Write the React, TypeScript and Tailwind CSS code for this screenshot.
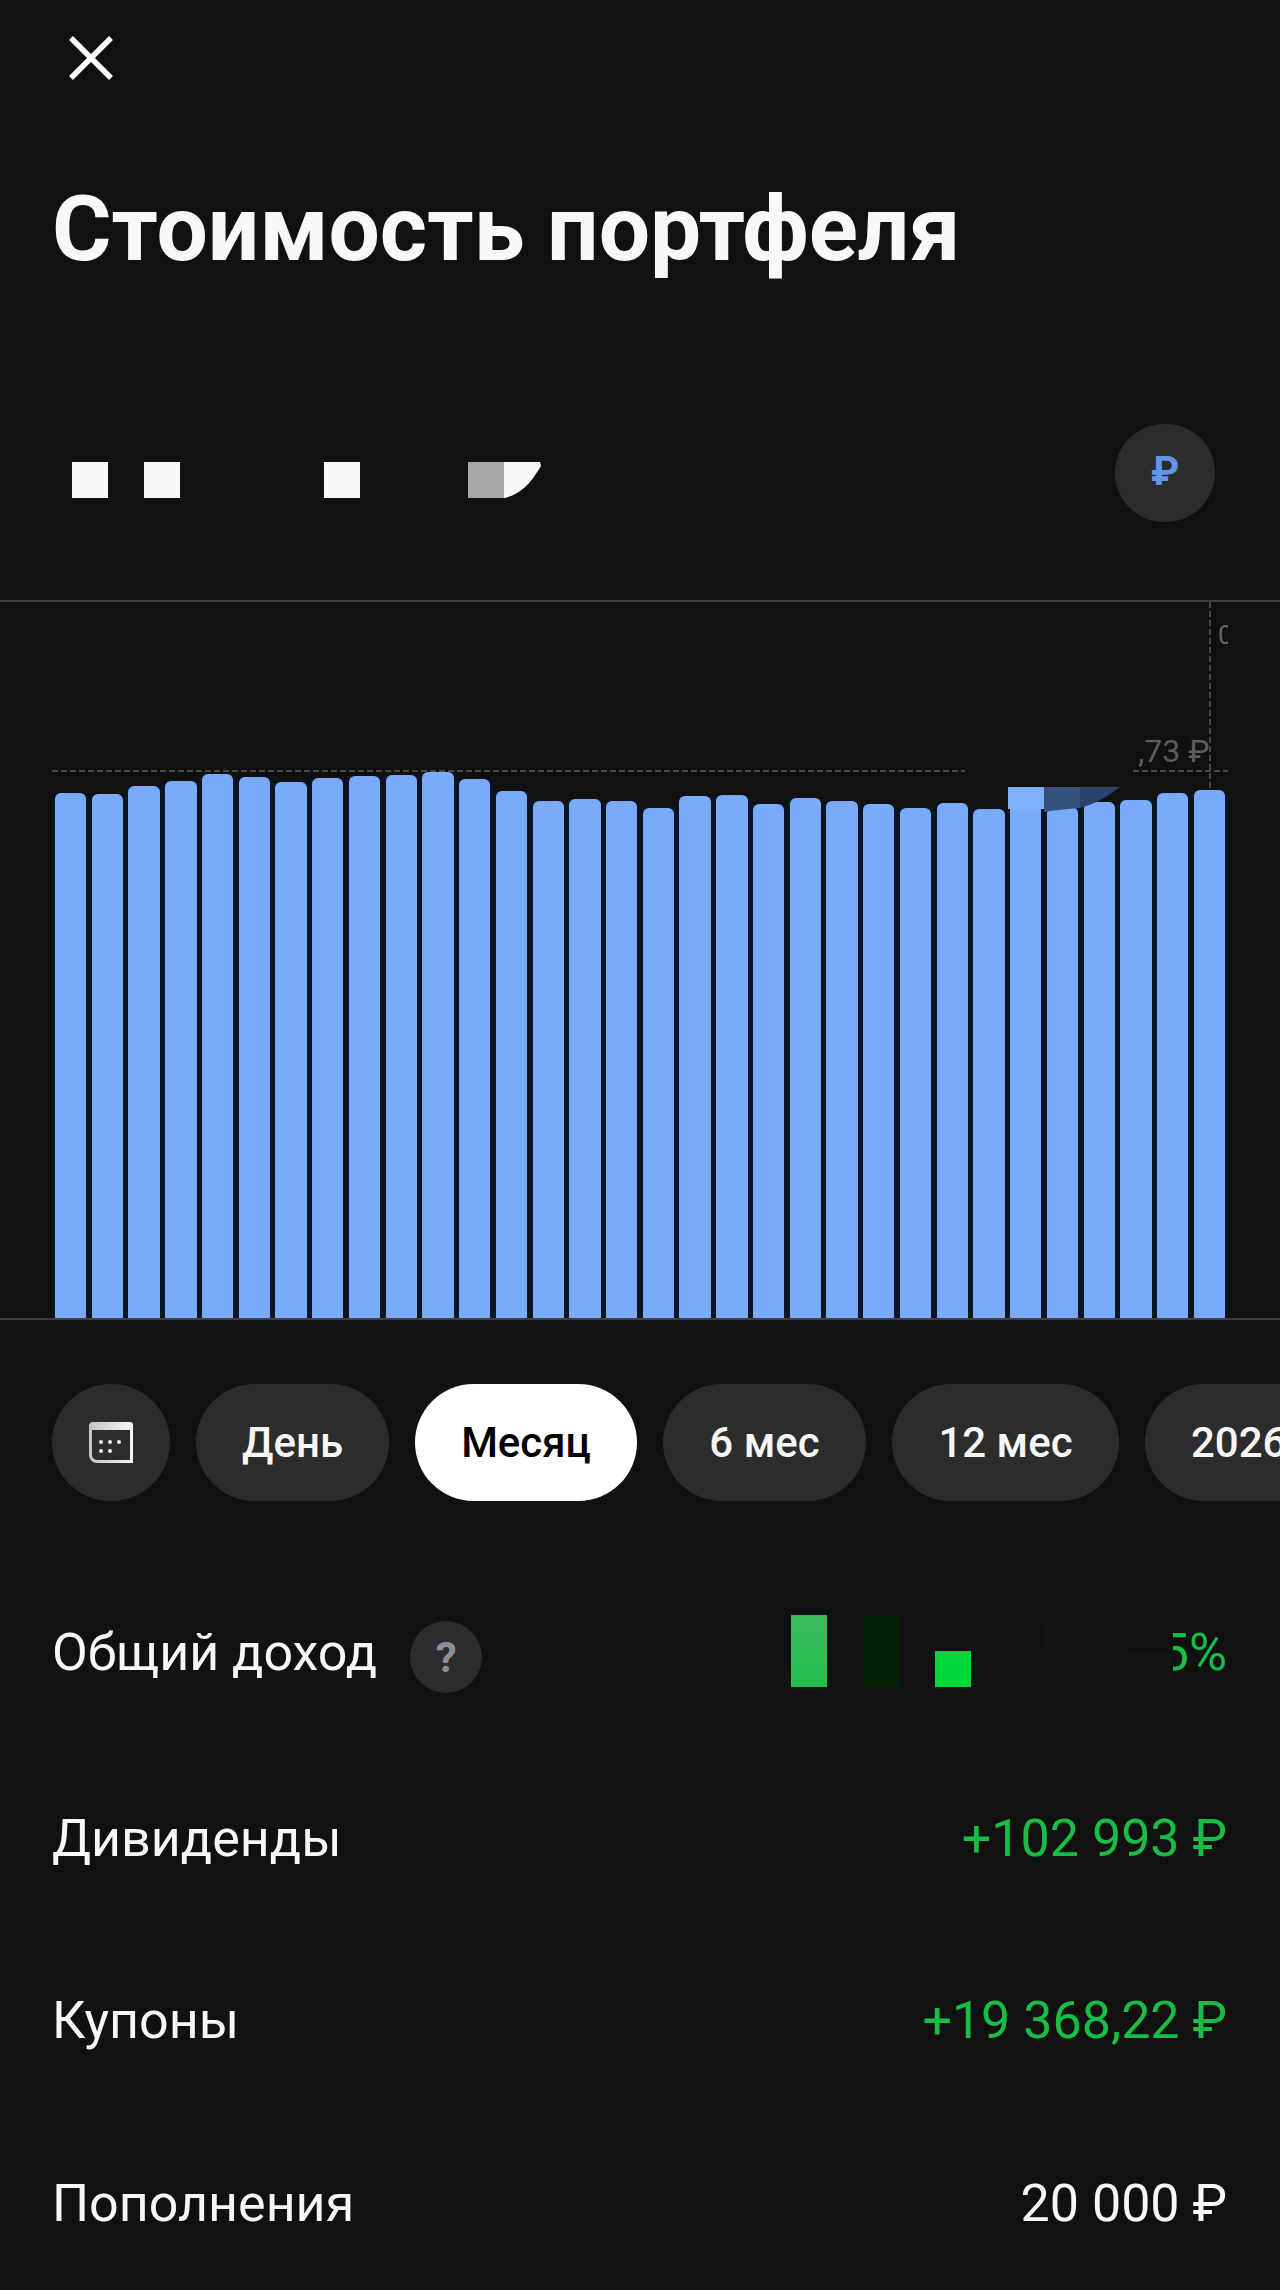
const tops = [793,794,786,781,774,777,782,778,776,775,772,779,791,801,799,801,808,796,795,804,798,801,804,808,803,809,790,807,802,800,793,790];
const CHART_BOTTOM = 1318;
const font = { fontFamily: "Roboto, 'Liberation Sans', sans-serif" };

function CalendarIcon() {
  return (
    <svg width="44" height="41" viewBox="0 0 44 41" fill="none" className="block">
      <defs>
        <linearGradient id="cal" x1="0" y1="0" x2="1" y2="0">
          <stop offset="0" stopColor="#c4c4c4" />
          <stop offset="1" stopColor="#f7f7f7" />
        </linearGradient>
      </defs>
      <path d="M4 0h37a3 3 0 0 1 3 3v38H8a8 8 0 0 1-8-8V4a4 4 0 0 1 4-4z" fill="url(#cal)" />
      <path d="M3 8h38v30H8a5 5 0 0 1-5-5z" fill="#2c2c2c" />
      <circle cx="12" cy="20" r="2" fill="#f0f0f0" />
      <circle cx="21" cy="20" r="2" fill="#f0f0f0" />
      <circle cx="30" cy="20" r="2" fill="#f0f0f0" />
      <circle cx="12" cy="29" r="2" fill="#f0f0f0" />
      <circle cx="21" cy="29" r="2" fill="#f0f0f0" />
    </svg>
  );
}

function Pill({ label, active, w }: { label: string; active?: boolean; w: string }) {
  return (
    <div className={`${w} h-[117px] shrink-0 rounded-full flex items-center justify-center text-[42px] font-medium ${active ? "bg-white text-black" : "bg-[#2c2c2c] text-[#f6f6f6]"}`}>
      {label}
    </div>
  );
}

function Row({ label, value, green, className }: { label: string; value: string; green?: boolean; className: string }) {
  return (
    <div className={`flex items-center justify-between pl-[52px] pr-[53px] text-[52px] leading-[60px] ${className}`}>
      <span className="text-[#f6f7f8]">{label}</span>
      <span className={green ? "text-[#17be45]" : "text-[#f6f7f8]"}>{value}</span>
    </div>
  );
}

export default function App() {
  return (
    <div style={font} className="w-[1280px] h-[2290px] bg-[#111112] overflow-hidden flex flex-col">
      <div className="pl-[69px] pt-[36px]">
        <svg width="44" height="44" viewBox="0 0 44 44" className="block">
          <path d="M2 2l40 40M42 2L2 42" stroke="#fff" strokeWidth="5.5" />
        </svg>
      </div>

      <h1 className="pl-[52px] mt-[96px] text-[91px] leading-[106px] font-bold text-[#f6f8fa] whitespace-nowrap">Стоимость портфеля</h1>

      <div className="flex items-center mt-[142px] pl-[72px] pr-[65px] h-[98px]">
        <div className="flex items-center mt-[14px]">
          <div className="w-[36px] h-[36px] bg-[#f6f8fa]" />
          <div className="w-[36px] h-[36px] bg-[#f6f8fa] ml-[36px]" />
          <div className="w-[36px] h-[36px] bg-[#f6f8fa] ml-[144px]" />
          <div className="w-[36px] h-[36px] bg-[#a8a8a8] ml-[108px]" />
          <svg width="38" height="36" viewBox="0 0 38 36" className="block">
            <path d="M0 0H36L37 4C32 12 27 20 20 26C14 31 8 34 1 36H0Z" fill="#f6f8fa" />
          </svg>
        </div>
        <div className="ml-auto w-[100px] h-[98px] rounded-full bg-[#2c2c2c] flex items-center justify-center text-[40px] font-bold text-[#5f96e8] pb-[3px]">₽</div>
      </div>

      <div className="relative mt-[78px] h-[720px] border-y-2 border-[#3f3f3f]">
        <div className="absolute inset-0 flex items-end pl-[55px] gap-[5.45px]">
          {tops.map((t, i) => (
            <div
              key={i}
              className="w-[31.3px] shrink-0 rounded-t-[6px] bg-[#7aabf9] shadow-[2.5px_0_0_#0a1525,-2.5px_0_0_#0a1525]"
              style={{ height: CHART_BOTTOM - t }}
            />
          ))}
        </div>

        <div className="absolute left-[52px] top-[168px] w-[913px] h-[2px] bg-[repeating-linear-gradient(90deg,#474747_0_6px,transparent_6px_9px)]" />
        <div className="absolute left-[1133px] top-[168px] w-[95px] h-[2px] bg-[repeating-linear-gradient(90deg,#474747_0_6px,transparent_6px_9px)]" />
        <div className="absolute left-[1209px] top-0 w-[2px] h-[186px] bg-[repeating-linear-gradient(180deg,#474747_0_6px,transparent_6px_9px)]" />

        <div className="absolute left-[1138px] top-[130px] text-[32px] leading-[38px] text-[#5e5e5e] whitespace-nowrap">,73 ₽</div>
        <div className="absolute left-[1218px] top-[18px] w-[10px] h-[30px] overflow-hidden text-[26px] leading-[30px] text-[#666]">0</div>

        <svg width="114" height="26" viewBox="0 0 114 26" className="absolute left-[1007px] top-[185px]">
          <path d="M1 0H37V22H1Z" fill="#7fb0f8" />
          <path d="M37 0H73V21C60 22 48 23 37 25Z" fill="#34527c" />
          <path d="M73 0H113C100 10 88 17 73 21Z" fill="#2a4368" />
        </svg>
      </div>

      <div className="flex items-center gap-[26px] pl-[52px] mt-[64px] overflow-hidden">
        <div className="w-[118px] h-[117px] shrink-0 rounded-full bg-[#2c2c2c] flex items-center justify-center">
          <CalendarIcon />
        </div>
        <Pill label="День" w="w-[193px]" />
        <Pill label="Месяц" w="w-[222px]" active />
        <Pill label="6 мес" w="w-[203px]" />
        <Pill label="12 мес" w="w-[227px]" />
        <div className="w-[200px] h-[117px] shrink-0 rounded-full bg-[#2c2c2c] pl-[46px] flex items-center text-[42px] font-medium text-[#f6f6f6]">2026</div>
      </div>

      <div className="relative flex items-center pl-[52px] pr-[53px] mt-[120px] h-[72px] text-[52px]">
        <span className="text-[#f6f7f8] mt-[-8px]">Общий доход</span>
        <div className="ml-[33px] w-[72px] h-[72px] rounded-full bg-[#2c2c2c] flex items-center justify-center text-[42px] font-bold text-[#8e8e98]">?</div>
        <div className="ml-auto flex items-end self-start mt-[-6px] h-[72px]">
          <div className="w-[36px] h-[72px] bg-[linear-gradient(#3cb95d,#22c04e)]" />
          <div className="w-[36px] h-[72px] bg-[#022002] ml-[36px]" />
          <div className="w-[36px] h-[36px] bg-[#00d83a] ml-[36px]" />
          <div className="w-[36px] h-[32px] bg-[#121412] ml-[72px] mb-[38px]" />
          <div className="w-[50px] h-[36px] bg-[#121412] ml-[42px]" />
        </div>
        <div className="ml-[2px] w-[54px] h-[60px] mt-[-8px] overflow-hidden flex justify-end text-[#17be45] text-[52px] leading-[60px]">
          <span>5%</span>
        </div>
      </div>

      <Row label="Дивиденды" value="+102 993 ₽" green className="mt-[116px]" />
      <Row label="Купоны" value="+19 368,22 ₽" green className="mt-[122px]" />
      <Row label="Пополнения" value="20 000 ₽" className="mt-[123px]" />
    </div>
  );
}
